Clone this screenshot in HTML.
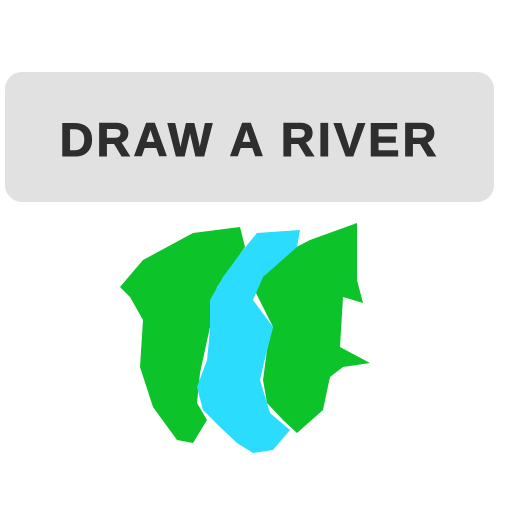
<!DOCTYPE html>
<html><head><style>
body{margin:0;width:512px;height:512px;background:#fff;overflow:hidden;position:relative}
.btn{position:absolute;left:5px;top:72px;width:489px;height:130px;background:#e1e1e1;border-radius:17px}
.t{position:absolute;left:0;width:499px;top:111px;text-align:center;font:bold 47px "Liberation Sans",sans-serif;color:#2e2e2e;letter-spacing:3px;line-height:58px;-webkit-text-stroke:1px #2e2e2e}
svg{position:absolute;left:0;top:0}
</style></head><body>
<div class="btn"></div>
<div class="t">DRAW A RIVER</div>
<svg width="512" height="512">
<path fill="#0cc42a" d="M120,287 L143,260 L193,233 L240,227 L245,247 L217,287 L210,327 L200,373 L197,403 L207,420 L193,443 L177,440 L153,407 L140,367 L143,320 L130,297 Z"/>
<path fill="#0cc42a" d="M253,287 L277,257 L310,240 L357,223 L357,280 L363,303 L343,297 L340,347 L370,363 L343,367 L330,377 L323,410 L297,433 L283,420 L267,403 L263,380 L267,350 L273,327 Z"/>
<path fill="#2bdcfc" d="M257,233 L300,230 L297,247 L263,277 L253,300 L273,327 L267,350 L260,380 L270,413 L290,430 L273,450 L253,453 L237,443 L220,427 L203,410 L197,387 L207,360 L210,330 L210,300 L223,277 L243,250 Z"/>
</svg>
</body></html>
